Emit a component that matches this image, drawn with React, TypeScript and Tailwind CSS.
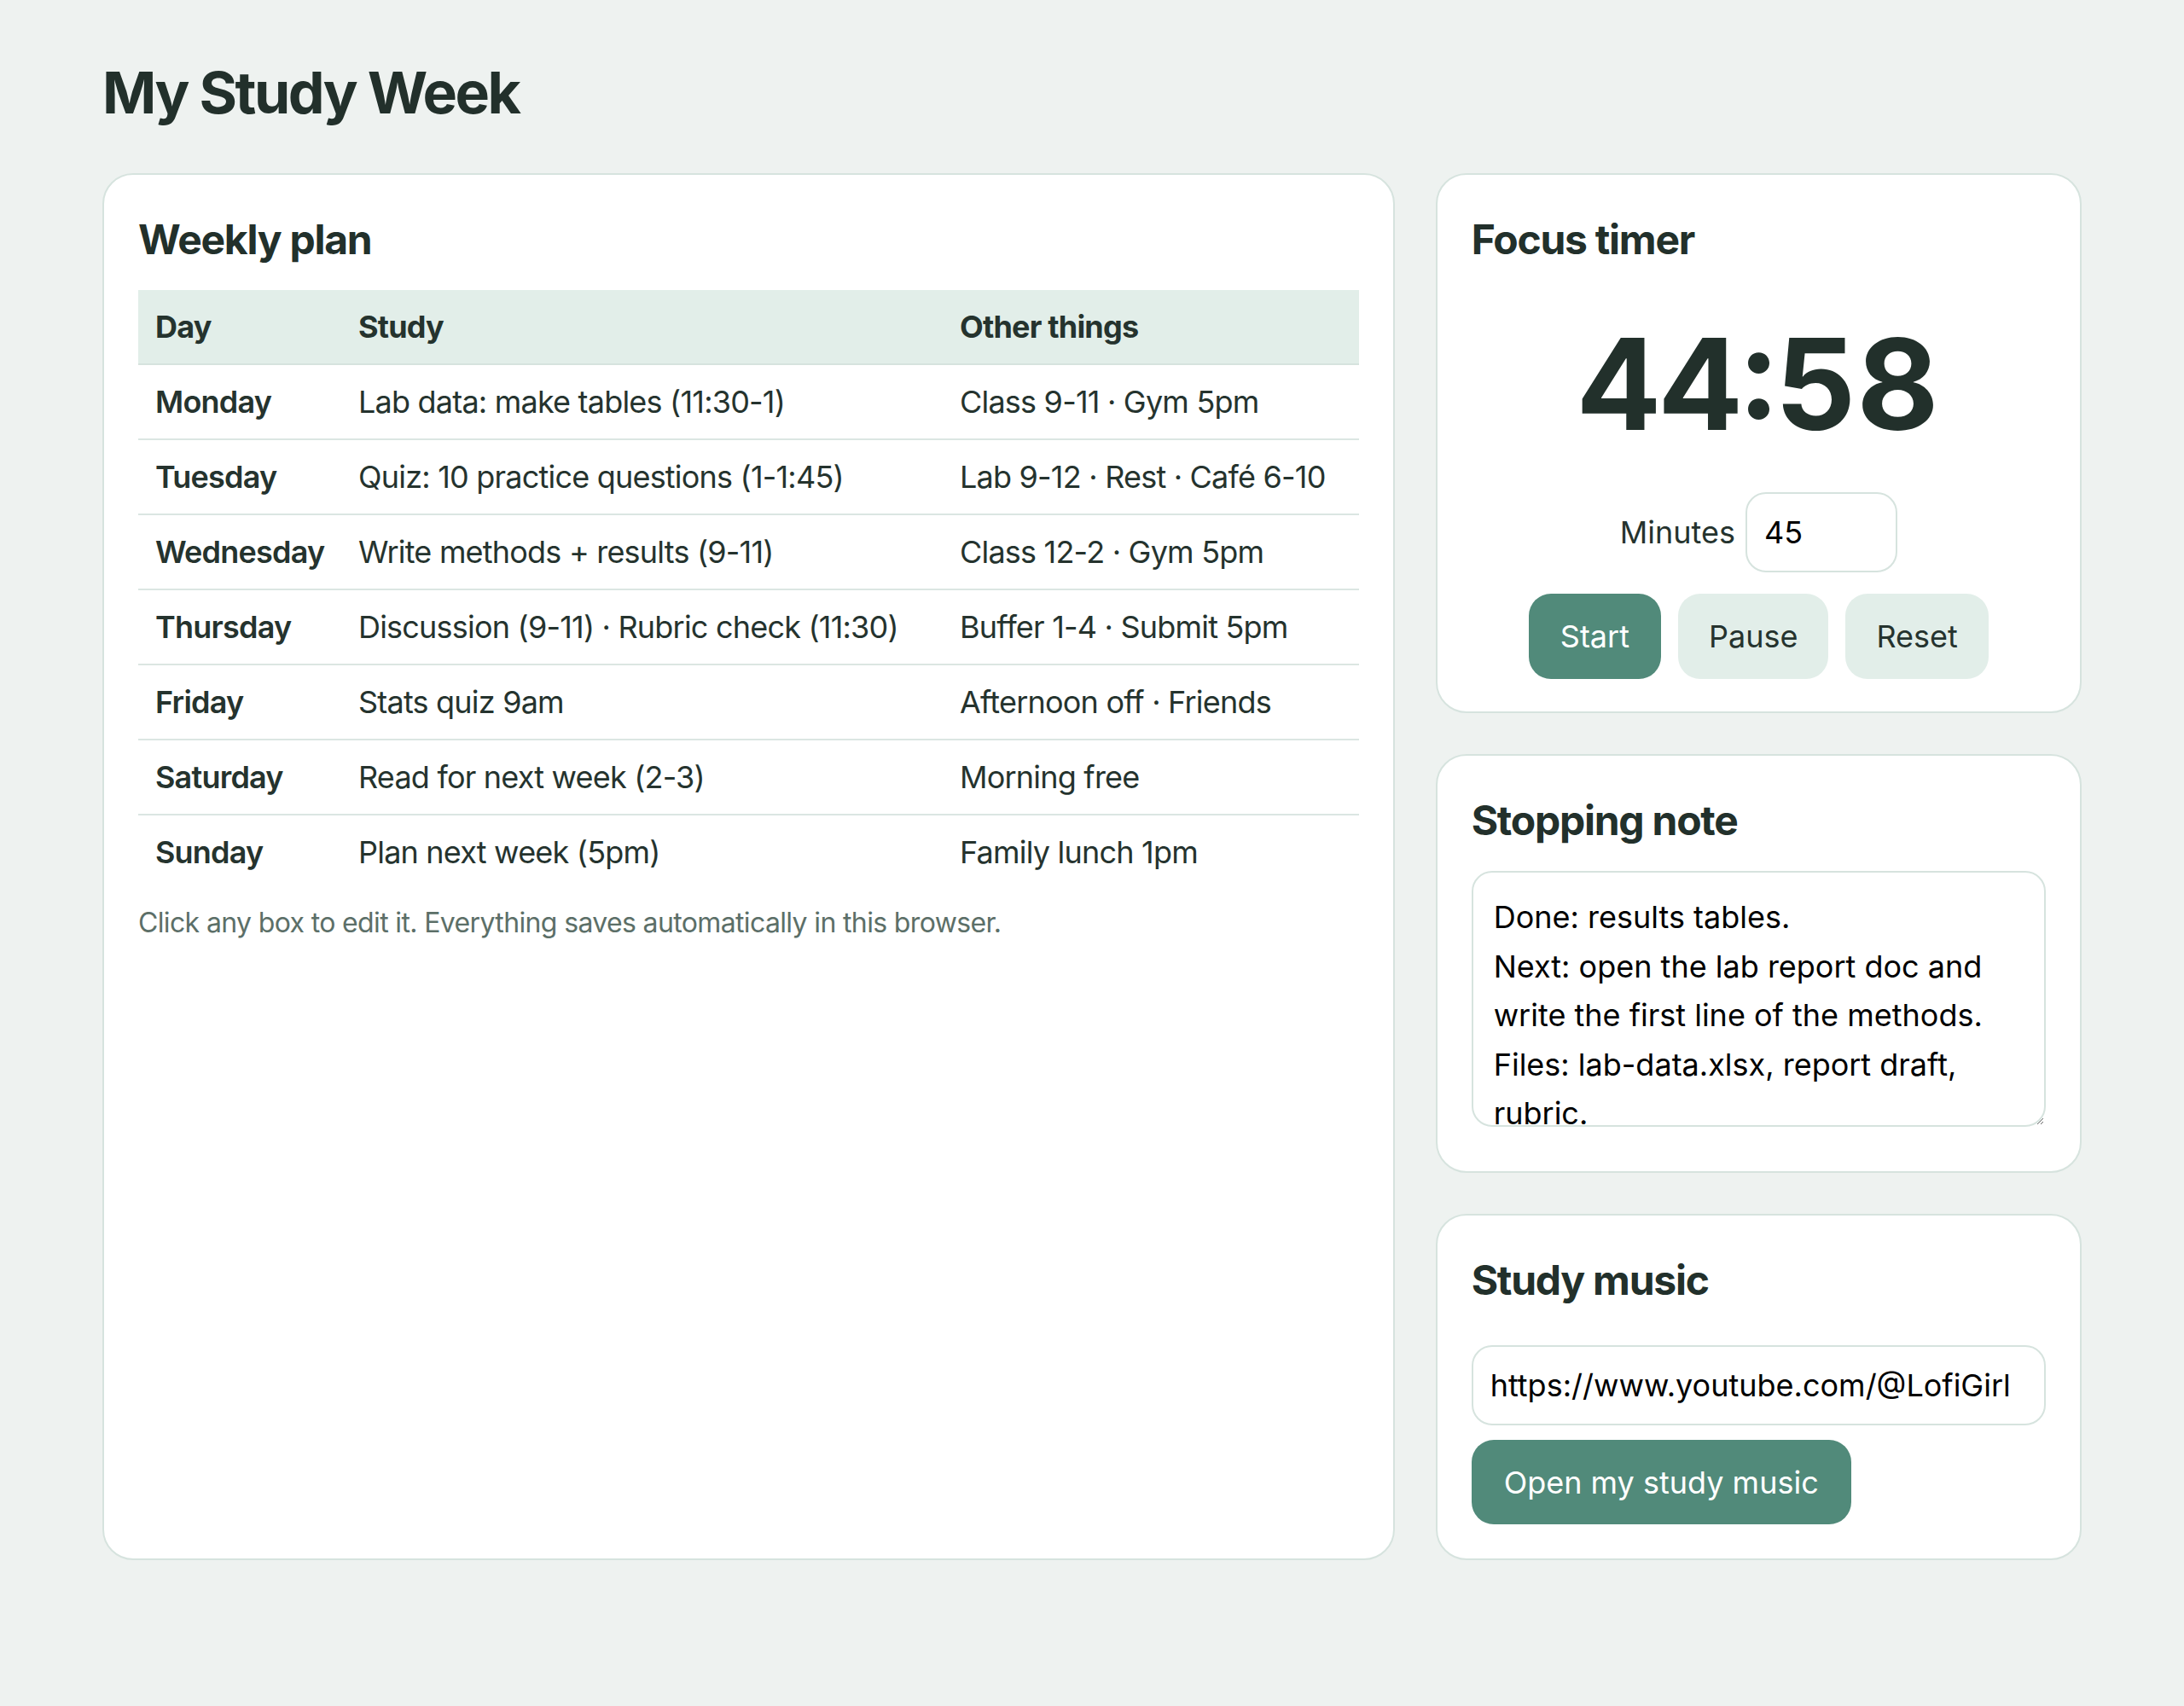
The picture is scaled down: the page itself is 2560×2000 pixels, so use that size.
import { useState } from "react";

const rows = [
  { day: "Monday", study: "Lab data: make tables (11:30-1)", other: "Class 9-11 · Gym 5pm" },
  { day: "Tuesday", study: "Quiz: 10 practice questions (1-1:45)", other: "Lab 9-12 · Rest · Café 6-10" },
  { day: "Wednesday", study: "Write methods + results (9-11)", other: "Class 12-2 · Gym 5pm" },
  { day: "Thursday", study: "Discussion (9-11) · Rubric check (11:30)", other: "Buffer 1-4 · Submit 5pm" },
  { day: "Friday", study: "Stats quiz 9am", other: "Afternoon off · Friends" },
  { day: "Saturday", study: "Read for next week (2-3)", other: "Morning free" },
  { day: "Sunday", study: "Plan next week (5pm)", other: "Family lunch 1pm" },
];

const card = "bg-white border-2 border-[#d6e3de] rounded-[36px] p-[40px]";
const heading = "text-[48px] leading-[72px] font-bold tracking-[-0.026em] text-[#22302b]";

function WeeklyPlan() {
  return (
    <section className={card}>
      <h2 className={heading}>Weekly plan</h2>
      <table className="mt-[23px] w-full table-fixed border-collapse text-[36px] leading-[54px] tracking-[-0.022em] text-[#25332e]">
        <colgroup>
          <col className="w-[238px]" />
          <col className="w-[705px]" />
          <col />
        </colgroup>
        <thead>
          <tr className="bg-[#e2eee9] border-b-2 border-[#d6e3de]">
            <th className="px-[20px] py-[16px] text-left font-bold">Day</th>
            <th className="px-[20px] py-[16px] text-left font-bold">Study</th>
            <th className="px-[20px] py-[16px] text-left font-bold">Other things</th>
          </tr>
        </thead>
        <tbody>
          {rows.map((r, i) => (
            <tr key={r.day} className={i < rows.length - 1 ? "border-b-2 border-[#dbe6e2]" : ""}>
              <td className="px-[20px] py-[16px] font-semibold whitespace-nowrap">{r.day}</td>
              <td className="px-[20px] py-[16px] whitespace-nowrap">{r.study}</td>
              <td className="px-[20px] py-[16px] whitespace-nowrap">{r.other}</td>
            </tr>
          ))}
        </tbody>
      </table>
      <p className="mt-[16px] text-[32px] leading-[48px] tracking-[-0.02em] text-[#5c6f68]">
        Click any box to edit it. Everything saves automatically in this browser.
      </p>
    </section>
  );
}

function FocusTimer() {
  const [minutes, setMinutes] = useState("45");
  return (
    <section className={card + " pb-[38px]"}>
      <h2 className={heading}>Focus timer</h2>
      <div className="mt-[60px] text-center text-[148px] leading-none font-bold tabular-nums text-[#22302b]">
        44:58
      </div>
      <div className="mt-[52px] flex items-center justify-center gap-[12px] text-[36px] text-[#25332e]">
        <label htmlFor="minutes">Minutes</label>
        <input
          id="minutes"
          value={minutes}
          onChange={(e) => setMinutes(e.target.value)}
          className="w-[178px] h-[94px] px-[20px] border-2 border-[#d6e3de] rounded-[24px] bg-white text-black text-[36px] outline-none"
        />
      </div>
      <div className="mt-[25px] flex justify-center gap-[20px] text-[36px]">
        <button className="h-[100px] px-[37px] rounded-[26px] bg-[#518a7a] text-white">Start</button>
        <button className="h-[100px] px-[36px] rounded-[26px] bg-[#e2eee9] text-[#25332e]">Pause</button>
        <button className="h-[100px] px-[36px] rounded-[26px] bg-[#e2eee9] text-[#25332e]">Reset</button>
      </div>
    </section>
  );
}

function StoppingNote() {
  const [note, setNote] = useState(
    "Done: results tables.\nNext: open the lab report doc and write the first line of the methods.\nFiles: lab-data.xlsx, report draft, rubric."
  );
  return (
    <section className={card}>
      <h2 className={heading}>Stopping note</h2>
      <textarea
        value={note}
        onChange={(e) => setNote(e.target.value)}
        className="mt-[23px] mb-[12px] block w-full h-[300px] p-[24px] border-2 border-[#d6e3de] rounded-[24px] text-[36px] leading-[1.6] text-black outline-none"
      />
    </section>
  );
}

function StudyMusic() {
  const [url, setUrl] = useState("https://www.youtube.com/@LofiGirl");
  return (
    <section className={card}>
      <h2 className={heading}>Study music</h2>
      <input
        value={url}
        onChange={(e) => setUrl(e.target.value)}
        className="mt-[40px] block w-full h-[94px] px-[20px] border-2 border-[#d6e3de] rounded-[24px] text-[36px] text-black outline-none"
      />
      <button className="mt-[17px] h-[99px] px-[38px] rounded-[26px] bg-[#518a7a] text-white text-[36px]">
        Open my study music
      </button>
    </section>
  );
}

export default function App() {
  return (
    <div className="min-h-screen bg-[#eef2f0] font-['Inter',sans-serif] text-[#25332e]">
      <div className="max-w-[2320px] mx-auto pt-[67px] pb-[64px]">
        <h1 className="text-[68px] leading-[82px] font-bold tracking-[-0.037em] text-[#22302b] mb-[54px]">
          My Study Week
        </h1>
        <div className="grid grid-cols-[2fr_1fr] gap-[48px]">
          <WeeklyPlan />
          <div className="flex flex-col gap-[48px]">
            <FocusTimer />
            <StoppingNote />
            <StudyMusic />
          </div>
        </div>
      </div>
    </div>
  );
}
